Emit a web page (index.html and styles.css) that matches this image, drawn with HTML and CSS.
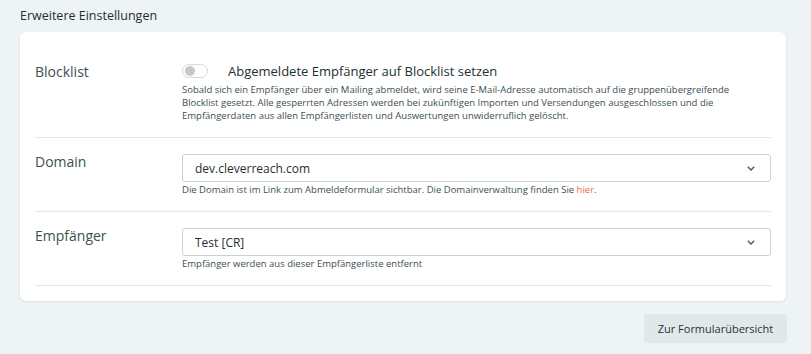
FILE: index.html
```html
<!DOCTYPE html>
<html lang="de">
<head>
  <meta charset="UTF-8">
  <meta name="viewport" content="width=device-width, initial-scale=1.0">
  <title>Erweitere Einstellungen</title>
  <link rel="stylesheet" href="styles.css">
</head>
<body>

  <div class="seite">
    <h3 class="titel">Erweitere Einstellungen</h3>

    <div class="karte">
      <div class="zeile">
        <div class="label">Blocklist</div>
        <div class="feld">
          <div class="schalter-zeile">
            <span class="schalter"><span class="knopf"></span></span>
            <span class="schalter-text">Abgemeldete Empfänger auf Blocklist setzen</span>
          </div>
          <p class="hilfe lang">Sobald sich ein Empfänger über ein Mailing abmeldet, wird seine E-Mail-Adresse automatisch auf die gruppenübergreifende Blocklist gesetzt. Alle gesperrten Adressen werden bei zukünftigen Importen und Versendungen ausgeschlossen und die Empfängerdaten aus allen Empfängerlisten und Auswertungen unwiderruflich gelöscht.</p>
        </div>
      </div>

      <div class="zeile">
        <div class="label">Domain</div>
        <div class="feld">
          <div class="auswahl">
            <span>dev.cleverreach.com</span>
            <svg class="pfeil" width="8" height="5" viewBox="0 0 8 5"><path d="M0.8 0.8l3.2 3.2 3.2-3.2" fill="none" stroke="#4f6268" stroke-width="1.5"/></svg>
          </div>
          <p class="hilfe eng">Die Domain ist im Link zum Abmeldeformular sichtbar. Die Domainverwaltung finden Sie <a href="#">hier</a>.</p>
        </div>
      </div>

      <div class="zeile">
        <div class="label">Empfänger</div>
        <div class="feld">
          <div class="auswahl">
            <span>Test [CR]</span>
            <svg class="pfeil" width="8" height="5" viewBox="0 0 8 5"><path d="M0.8 0.8l3.2 3.2 3.2-3.2" fill="none" stroke="#4f6268" stroke-width="1.5"/></svg>
          </div>
          <p class="hilfe eng">Empfänger werden aus dieser Empfängerliste entfernt</p>
        </div>
      </div>
    </div>

    <div class="aktionen">
      <button class="zurueck">Zur Formularübersicht</button>
    </div>
  </div>

</body>
</html>
```

FILE: styles.css
```css
* {
  margin: 0;
  padding: 0;
  box-sizing: border-box;
}

body {
  background: #eef3f6;
  font-family: 'Open Sans', sans-serif;
  color: #1f3234;
}

.seite {
  padding: 8px 25px 0 20px;
}

.titel {
  font-size: 12.5px;
  font-weight: 500;
  line-height: 16px;
  color: #1d3033;
  margin-bottom: 8px;
}

.karte {
  background: #fff;
  border-radius: 6px;
  box-shadow: 0 1px 3px rgba(0,0,0,0.08);
  padding: 16px 15px 15px;
}

.zeile {
  display: flex;
  padding: 16px 0 15px;
  border-bottom: 1px solid #e2e7e8;
}

.label {
  width: 147px;
  flex-shrink: 0;
  font-size: 14px;
  line-height: 16px;
  color: #3c5053;
}

.feld {
  flex: 1;
}

.schalter-zeile {
  display: flex;
  align-items: center;
  gap: 20px;
  height: 14px;
}

.schalter {
  width: 26px;
  height: 14px;
  border: 1px solid #d6dbdc;
  border-radius: 7px;
  display: flex;
  align-items: center;
  padding-left: 2px;
}

.knopf {
  width: 10px;
  height: 10px;
  border-radius: 50%;
  background: #c4c8c9;
}

.schalter-text {
  font-size: 13px;
  line-height: 14px;
  color: #1d3033;
}

.hilfe {
  font-size: 9.5px;
  line-height: 13px;
  color: #3d4f52;
}

.hilfe.lang {
  max-width: 560px;
  margin-top: 5px;
}

.hilfe.eng {
  margin-top: 1px;
}

.hilfe a {
  color: #f26b4a;
  text-decoration: none;
}

.auswahl {
  height: 28px;
  border: 1px solid #c9d1d3;
  border-radius: 3px;
  display: flex;
  align-items: center;
  justify-content: space-between;
  padding: 0 15px 0 12px;
  font-size: 12px;
  color: #1f2f31;
}

.pfeil {
  display: block;
}

.aktionen {
  display: flex;
  justify-content: flex-end;
  margin-top: 13px;
}

.zurueck {
  background: #e2e8ea;
  border: none;
  border-radius: 4px;
  width: 143px;
  height: 29px;
  font-family: 'Open Sans', sans-serif;
  font-size: 11px;
  font-weight: 500;
  color: #243538;
  margin-right: -1px;
}
```
